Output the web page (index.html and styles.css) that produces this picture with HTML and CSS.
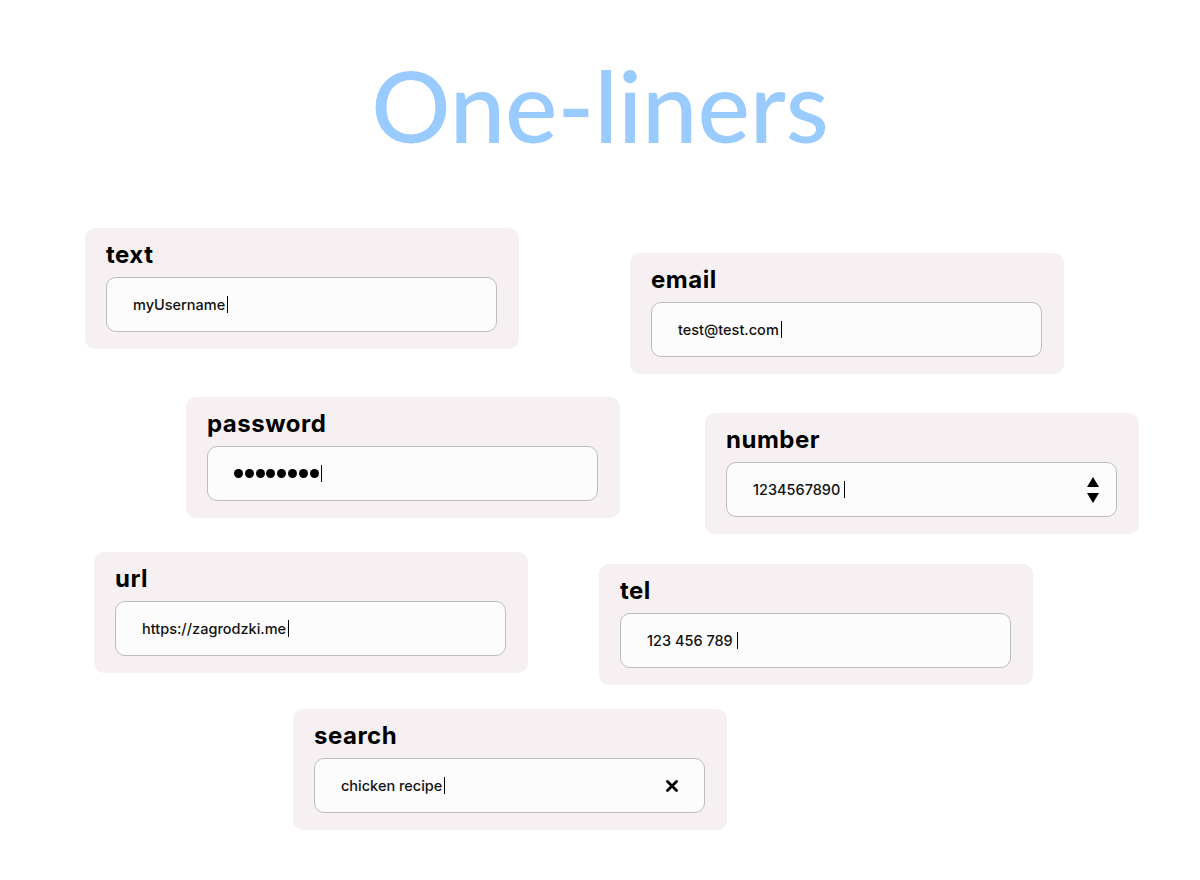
FILE: index.html
```html
<!DOCTYPE html>
<html lang="en">
<head>
<meta charset="utf-8">
<title>One-liners</title>
<link rel="stylesheet" href="styles.css">
</head>
<body>
<header class="header">
  <h1 class="title">One-liners</h1>
</header>
<main class="board">
  <div class="col col-left">
    <section class="card card-text">
      <div class="label">text</div>
      <div class="field"><span class="value">myUsername</span><span class="caret"></span></div>
    </section>
    <section class="card card-password">
      <div class="label">password</div>
      <div class="field"><span class="dots"><i></i><i></i><i></i><i></i><i></i><i></i><i></i><i></i></span><span class="caret"></span></div>
    </section>
    <section class="card card-url">
      <div class="label">url</div>
      <div class="field"><span class="value">https://zagrodzki.me</span><span class="caret"></span></div>
    </section>
    <section class="card card-search">
      <div class="label">search</div>
      <div class="field field-search"><span class="value">chicken recipe</span><span class="caret"></span>
        <svg class="clear" width="12" height="12" viewBox="0 0 12 12" aria-hidden="true"><path d="M1.5 1.5 L10.5 10.5 M10.5 1.5 L1.5 10.5" stroke="#000" stroke-width="2.8" stroke-linecap="round"/></svg>
      </div>
    </section>
  </div>
  <div class="col col-right">
    <section class="card card-email">
      <div class="label">email</div>
      <div class="field"><span class="value">test@test.com</span><span class="caret"></span></div>
    </section>
    <section class="card card-number">
      <div class="label">number</div>
      <div class="field field-number"><span class="value">1234567890</span><span class="caret caret-spaced"></span>
        <span class="spinner"><span class="up"></span><span class="down"></span></span>
      </div>
    </section>
    <section class="card card-tel">
      <div class="label">tel</div>
      <div class="field"><span class="value">123 456 789</span><span class="caret caret-spaced"></span></div>
    </section>
  </div>
</main>
</body>
</html>
```

FILE: styles.css
```css
* { box-sizing: border-box; }

html, body {
  margin: 0;
  padding: 0;
  background: #ffffff;
}

body {
  width: 1200px;
  height: 880px;
  overflow: hidden;
  font-family: "Inter", "Noto Sans", sans-serif;
  color: #000;
}

.header {
  height: 228px;
  padding-top: 46px;
}

.title {
  margin: 0;
  text-align: center;
  font-family: "Lato", "Noto Sans", sans-serif;
  font-weight: 500;
  font-size: 99px;
  line-height: 1.2;
  color: #99cbff;
}

.board {
  display: flex;
  align-items: flex-start;
}

.col {
  display: flex;
  flex-direction: column;
  align-items: flex-start;
}

.col-left {
  width: 514px;
  margin-left: 85px;
  flex-shrink: 0;
}

.col-right {
  padding-top: 25px;
}

.card {
  width: 434px;
  flex-shrink: 0;
  background: #f6f0f2;
  border-radius: 10px;
  padding: 12px 22px 17px 21px;
}

.card-password { margin-top: 48px; margin-left: 101px; }
.card-url { margin-top: 34px; margin-left: 9px; }
.card-search { margin-top: 36px; margin-left: 208px; }

.card-email { margin-left: 31px; }
.card-number { margin-top: 39px; margin-left: 106px; }
.card-tel { margin-top: 30px; }

.label {
  font-size: 24px;
  font-weight: 700;
  line-height: 29px;
  height: 29px;
  margin-bottom: 8px;
  letter-spacing: 0.5px;
}

.field {
  height: 55px;
  background: #fcfcfc;
  border: 1px solid #bdbdbd;
  border-radius: 10px;
  padding: 0 26px 0 26px;
  display: flex;
  align-items: center;
  font-size: 14.5px;
  font-weight: 500;
  color: #111;
}

.value {
  white-space: pre;
}

.caret {
  display: inline-block;
  width: 1px;
  height: 17px;
  background: #000;
  margin-left: 2px;
}

.caret-spaced {
  margin-left: 4px;
}

.dots {
  display: flex;
  gap: 1.8px;
}

.dots i {
  display: block;
  width: 9px;
  height: 9px;
  border-radius: 50%;
  background: #000;
}

.field-search .clear {
  margin-left: auto;
}

.field-number {
  padding-right: 17px;
}

.spinner {
  margin-left: auto;
  display: flex;
  flex-direction: column;
  gap: 6px;
}

.spinner .up,
.spinner .down {
  display: block;
  width: 0;
  height: 0;
  border-left: 6px solid transparent;
  border-right: 6px solid transparent;
}

.spinner .up { border-bottom: 10px solid #000; }
.spinner .down { border-top: 10px solid #000; }
```
